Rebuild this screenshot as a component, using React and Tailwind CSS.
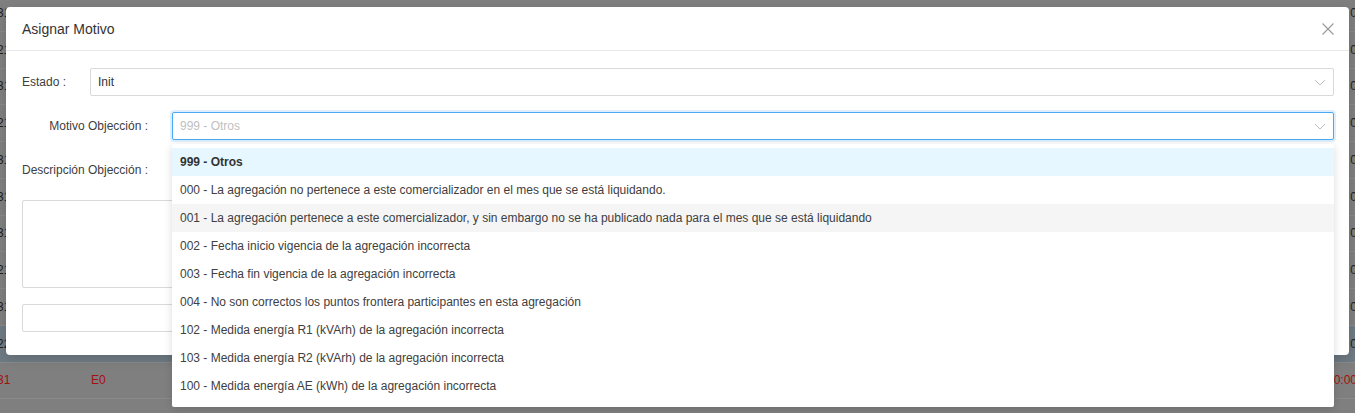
import React from "react";

const OPTIONS = [
  "999 - Otros",
  "000 - La agregación no pertenece a este comercializador en el mes que se está liquidando.",
  "001 - La agregación pertenece a este comercializador, y sin embargo no se ha publicado nada para el mes que se está liquidando",
  "002 - Fecha inicio vigencia de la agregación incorrecta",
  "003 - Fecha fin vigencia de la agregación incorrecta",
  "004 - No son correctos los puntos frontera participantes en esta agregación",
  "102 - Medida energía R1 (kVArh) de la agregación incorrecta",
  "103 - Medida energía R2 (kVArh) de la agregación incorrecta",
  "100 - Medida energía AE (kWh) de la agregación incorrecta",
  "101 - Medida energía AS (kWh) de la agregación incorrecta",
];

const ROWS = [
  { id: "31" },
  { id: "21" },
  { id: "31" },
  { id: "21" },
  { id: "31" },
  { id: "31" },
  { id: "31" },
  { id: "21" },
  { id: "31" },
  { id: "22", active: true },
  { id: "31", error: true },
  { id: "" },
];

const Chevron = () => (
  <svg width="12" height="7" viewBox="0 0 12 7" fill="none">
    <path d="M1 1l5 5 5-5" stroke="#bfbfbf" strokeWidth="1" />
  </svg>
);

const BgRow = ({ row }) => {
  const color = row.error ? "text-[#a31010]" : "text-[#1f1f1f]";
  return (
    <div
      className={
        "flex h-[36.75px] items-center border-b border-[#8a8a8a] " +
        (row.active ? "bg-[#6f7b84]" : "")
      }
    >
      <div className={"-ml-[3px] w-[94px] " + color}>{row.id}</div>
      <div className={"flex-1 " + color}>{row.error ? "E0" : ""}</div>
      <div className={"-mr-[2px] " + color}>
        {row.error ? "2019-05-01 00:00:00" : row.id ? "0" : ""}
      </div>
    </div>
  );
};

export default function App() {
  return (
    <div className="relative h-[413px] w-full overflow-hidden bg-[#7f7f7f] font-['Liberation_Sans',Arial,sans-serif] text-[12px] leading-[18px]">
      {/* table behind the mask */}
      <div className="-mt-[5px]">
        {ROWS.map((r, i) => (
          <BgRow key={i} row={r} />
        ))}
      </div>

      {/* modal */}
      <div className="absolute left-[6px] right-[6px] top-[7px] rounded-[4px] bg-white shadow-[0_4px_12px_rgba(0,0,0,0.15)]">
        <div className="flex items-center justify-between border-b border-[#e8e8e8] pt-[11px] pb-[10px] pl-4 pr-[15px]">
          <span className="text-[14px] leading-[22px] text-[#333]">Asignar Motivo</span>
          <svg width="12" height="12" viewBox="0 0 12 12" fill="none">
            <path d="M0.5 0.5l11 11M11.5 0.5l-11 11" stroke="#999" strokeWidth="1.1" />
          </svg>
        </div>

        <div className="pl-4 pr-[15px] pt-[17px] pb-[23px] text-[#404040]">
          <div className="flex items-center">
            <label className="w-[68px] shrink-0">Estado :</label>
            <div className="flex h-[28px] flex-1 items-center justify-between rounded-[2px] border border-[#d9d9d9] pl-[7px] pr-[7px] text-[#333]">
              <span>Init</span>
              <Chevron />
            </div>
          </div>

          <div className="mt-4 flex items-center">
            <label className="w-[150px] shrink-0 pr-[24px] text-right">Motivo Objección :</label>
            <div className="flex h-[28px] flex-1 items-center justify-between rounded-[2px] border border-[#4aa8f5] pl-[7px] pr-[7px] shadow-[0_0_0_2px_rgba(24,144,255,0.15)]">
              <span className="text-[#bfbfbf]">999 - Otros</span>
              <Chevron />
            </div>
          </div>

          <div className="mt-[21px]">Descripción Objección :</div>
          <div className="mt-[21px] h-[88px] rounded-[2px] border border-[#d9d9d9]" />
          <div className="mt-4 h-[28px] rounded-[2px] border border-[#d9d9d9]" />
        </div>
      </div>

      {/* open select dropdown */}
      <div className="absolute left-[172px] top-[144px] h-[263px] w-[1162px] overflow-hidden rounded-[2px] bg-white py-1 shadow-[0_2px_8px_rgba(0,0,0,0.15)]">
        {OPTIONS.map((o, i) => (
          <div
            key={o}
            className={
              "flex h-[28px] items-center px-2 whitespace-nowrap " +
              (i === 0
                ? "bg-[#e6f7ff] font-semibold text-[#333]"
                : i === 2
                ? "bg-[#f5f5f5] text-[#404040]"
                : "text-[#404040]")
            }
          >
            {o}
          </div>
        ))}
      </div>
    </div>
  );
}
